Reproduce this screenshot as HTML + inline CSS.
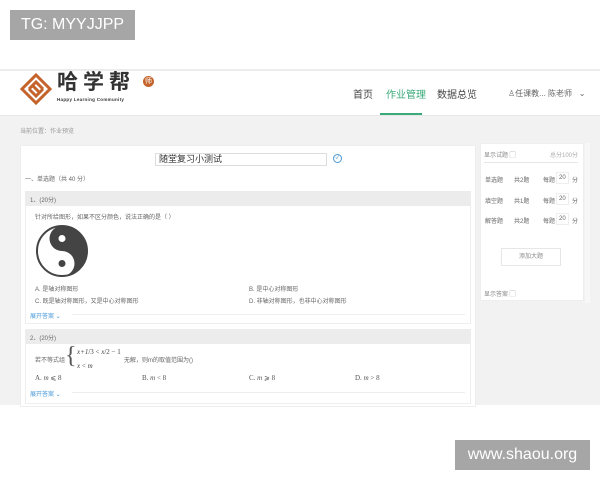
<!DOCTYPE html>
<html><head><meta charset="utf-8"><style>
*{margin:0;padding:0;box-sizing:border-box}
body{width:600px;height:480px;position:relative;background:#fff;font-family:"Liberation Sans","Noto Sans CJK SC",sans-serif;overflow:hidden;color:#555}
.a{position:absolute;white-space:nowrap}
.wm{position:absolute;background:#a6a6a6;color:#fff;font-size:16px;line-height:30px;text-align:center}
.s{font-size:6px;color:#666}
</style></head><body>
<div class="wm" style="left:10px;top:10px;width:125px;height:30px">TG: MYYJJPP</div>
<div class="a" style="left:0;top:69px;width:600px;height:2px;background:#ececec"></div>
<div class="a" style="left:0;top:115px;width:600px;height:290px;background:#f2f2f2;border-top:1px solid #e6e6e6"></div>
<svg class="a" style="left:20px;top:73px" width="32" height="32" viewBox="0 0 32 32"><g fill="none" stroke="#c4642c" stroke-width="3"><path d="M16 2 L30 16 L16 30 L2 16 Z"/><path d="M9 16 L16 9 L23 16 M9 16 L16 23 L23 16"/><path d="M12 12 L20 20"/></g></svg>
<div class="a" style="left:57px;top:72px;font-size:21px;line-height:22px;font-weight:bold;color:#333;letter-spacing:5px">哈学帮</div>
<div class="a" style="left:143px;top:76px;width:11px;height:11px;border-radius:50%;background:#c4642c;color:#fff;font-size:7px;line-height:11px;text-align:center">师</div>
<div class="a" style="left:57px;top:97px;font-size:4.5px;color:#333;font-weight:bold;letter-spacing:0.3px">Happy Learning Community</div>
<div class="a" style="left:353px;top:86px;font-size:10px;color:#444">首页</div>
<div class="a" style="left:386px;top:86px;font-size:10px;color:#3aaa7a">作业管理</div>
<div class="a" style="left:380px;top:113px;width:42px;height:2px;background:#3aaa7a"></div>
<div class="a" style="left:437px;top:86px;font-size:10px;color:#444">数据总览</div>
<div class="a" style="left:508px;top:88px;font-size:8px;color:#666">♙任课教... 陈老师 &nbsp; ⌄</div>
<div class="a s" style="left:20px;top:126px;color:#999">当前位置：作业预览</div>
<div class="a" style="left:20px;top:145px;width:456px;height:262px;background:#fff;border:1px solid #eee"></div>
<div class="a" style="left:155px;top:153px;width:172px;height:13px;border:1px solid #ddd;font-size:9px;color:#333;padding-left:3px;line-height:11px">随堂复习小测试</div>
<div class="a" style="left:333px;top:154px;width:9px;height:9px;border:1.5px solid #4a9ad8;border-radius:50%;font-size:6px;color:#4a9ad8;line-height:6px;text-align:center">✓</div>
<div class="a s" style="left:25px;top:174px">一、单选题（共 40 分）</div>
<div class="a" style="left:25px;top:191px;width:446px;height:133px;border:1px solid #eee;background:#fff"></div>
<div class="a" style="left:25px;top:191px;width:446px;height:15px;background:#ececec"></div>
<div class="a s" style="left:30px;top:195px">1、(20分)</div>
<div class="a s" style="left:35px;top:212px">针对所给图形，如果不区分颜色，说法正确的是（ ）</div>
<svg class="a" style="left:35px;top:224px" width="54" height="54" viewBox="0 0 54 54"><circle cx="27" cy="27" r="25" fill="#fff" stroke="#444" stroke-width="2"/><path d="M27 2 A25 25 0 0 1 27 52 A12.5 12.5 0 0 0 27 27 A12.5 12.5 0 0 1 27 2Z" fill="#444"/><circle cx="27" cy="14.5" r="3.5" fill="#fff"/><circle cx="27" cy="39.5" r="3.5" fill="#444"/></svg>
<div class="a s" style="left:35px;top:284px">A. 是轴对称图形</div>
<div class="a s" style="left:249px;top:284px">B. 是中心对称图形</div>
<div class="a s" style="left:35px;top:296px">C. 既是轴对称图形，又是中心对称图形</div>
<div class="a s" style="left:249px;top:296px">D. 非轴对称图形，也非中心对称图形</div>
<div class="a s" style="left:30px;top:311px;color:#4a9ad8">展开答案 ⌄</div>
<div class="a" style="left:72px;top:314px;width:393px;height:1px;background:#eee"></div>
<div class="a" style="left:25px;top:329px;width:446px;height:75px;border:1px solid #eee;background:#fff"></div>
<div class="a" style="left:25px;top:329px;width:446px;height:15px;background:#ececec"></div>
<div class="a s" style="left:30px;top:333px">2、(20分)</div>
<div class="a s" style="left:35px;top:355px">若不等式组</div>
<div class="a" style="left:65px;top:344px;font-size:24px;color:#555;font-family:'Liberation Serif',serif;line-height:24px">{</div>
<div class="a" style="left:77px;top:348px;font-size:7px;color:#444;font-family:'Liberation Serif',serif"><i>x+1</i>/3 &lt; <i>x</i>/2 − 1</div>
<div class="a" style="left:77px;top:362px;font-size:7px;color:#444;font-family:'Liberation Serif',serif"><i>x</i> &lt; <i>m</i></div>
<div class="a s" style="left:124px;top:355px">无解，则m的取值范围为()</div>
<div class="a" style="left:35px;top:374px;font-size:7px;color:#555;font-family:'Liberation Serif',serif">A. <i>m</i> ⩽ 8</div>
<div class="a" style="left:142px;top:374px;font-size:7px;color:#555;font-family:'Liberation Serif',serif">B. <i>m</i> &lt; 8</div>
<div class="a" style="left:249px;top:374px;font-size:7px;color:#555;font-family:'Liberation Serif',serif">C. <i>m</i> ⩾ 8</div>
<div class="a" style="left:355px;top:374px;font-size:7px;color:#555;font-family:'Liberation Serif',serif">D. <i>m</i> &gt; 8</div>
<div class="a s" style="left:30px;top:389px;color:#4a9ad8">展开答案 ⌄</div>
<div class="a" style="left:72px;top:392px;width:393px;height:1px;background:#eee"></div>
<div class="a" style="left:480px;top:143px;width:104px;height:158px;background:#fff;border:1px solid #eee"></div>
<div class="a" style="left:585px;top:143px;width:5px;height:160px;background:#f7f7f7"></div>
<div class="a s" style="left:484px;top:150px;color:#888">显示试题 ▢</div>
<div class="a s" style="left:550px;top:150px;color:#aaa">总分100分</div>
<div class="a" style="left:484px;top:162px;width:94px;height:1px;background:#e6e6e6"></div>
<div class="a s" style="left:485px;top:175px">单选题</div><div class="a s" style="left:514px;top:175px">共2题</div><div class="a s" style="left:543px;top:175px">每题</div><div class="a s" style="left:556px;top:172px;border:1px solid #eee;padding:2px 2px">20</div><div class="a s" style="left:572px;top:175px">分</div>
<div class="a s" style="left:485px;top:196px">填空题</div><div class="a s" style="left:514px;top:196px">共1题</div><div class="a s" style="left:543px;top:196px">每题</div><div class="a s" style="left:556px;top:193px;border:1px solid #eee;padding:2px 2px">20</div><div class="a s" style="left:572px;top:196px">分</div>
<div class="a s" style="left:485px;top:216px">解答题</div><div class="a s" style="left:514px;top:216px">共2题</div><div class="a s" style="left:543px;top:216px">每题</div><div class="a s" style="left:556px;top:213px;border:1px solid #eee;padding:2px 2px">20</div><div class="a s" style="left:572px;top:216px">分</div>
<div class="a s" style="left:501px;top:248px;width:60px;height:18px;border:1px solid #e6e6e6;text-align:center;line-height:16px;color:#888">添加大题</div>
<div class="a s" style="left:484px;top:289px;color:#888">显示答案 ▢</div>
<div class="wm" style="left:455px;top:440px;width:135px;height:30px">www.shaou.org</div>
</body></html>
